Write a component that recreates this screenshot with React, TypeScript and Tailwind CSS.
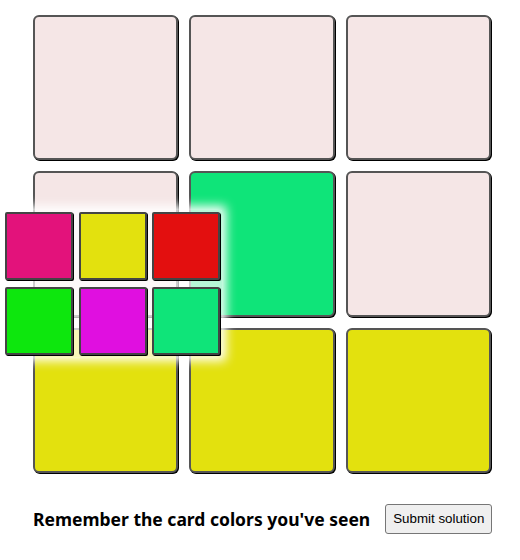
import React from 'react';

const cards = [
  '#f5e6e6', '#f5e6e6', '#f5e6e6',
  '#f5e6e6', '#0fe479', '#f5e6e6',
  '#e3e10e', '#e3e10e', '#e3e10e',
];

const swatches = ['#e3127b', '#e3e10e', '#e30f0f', '#0de70d', '#e00fe0', '#0fe479'];

export default function App() {
  return (
    <div className="relative w-[520px] h-[560px] bg-white font-['Noto_Sans',sans-serif]">
      <div className="pt-[15px] pl-[33px]">
        <div className="grid grid-cols-3 gap-[11px] w-[458px]">
          {cards.map((color, i) => (
            <div
              key={i}
              className="aspect-square rounded-md border-2 border-[#555] shadow-[1px_1px_0_0_#000]"
              style={{ backgroundColor: color }}
            />
          ))}
        </div>

        <div className="flex items-center mt-[31px] gap-[15px]">
          <h2 className="text-[17.5px] font-bold text-black">Remember the card colors you've seen</h2>
          <button className="h-[30px] px-[7px] rounded-[3px] border border-[#767676] bg-[#efefef] text-[13.33px] text-black font-['Liberation_Sans',Arial,sans-serif]">
            Submit solution
          </button>
        </div>
      </div>

      {/* colour palette */}
      <div className="absolute left-[3px] top-[210px] p-[2px] grid grid-cols-3 gap-x-[5.5px] gap-y-[6.5px] bg-white/70 shadow-[0_0_10px_4px_#fff]">
        {swatches.map((color, i) => (
          <div
            key={i}
            className="w-[68px] h-[68px] rounded-[2px] border-2 border-[#444] shadow-[1px_1px_0_0_#000]"
            style={{ backgroundColor: color }}
          />
        ))}
      </div>
    </div>
  );
}
